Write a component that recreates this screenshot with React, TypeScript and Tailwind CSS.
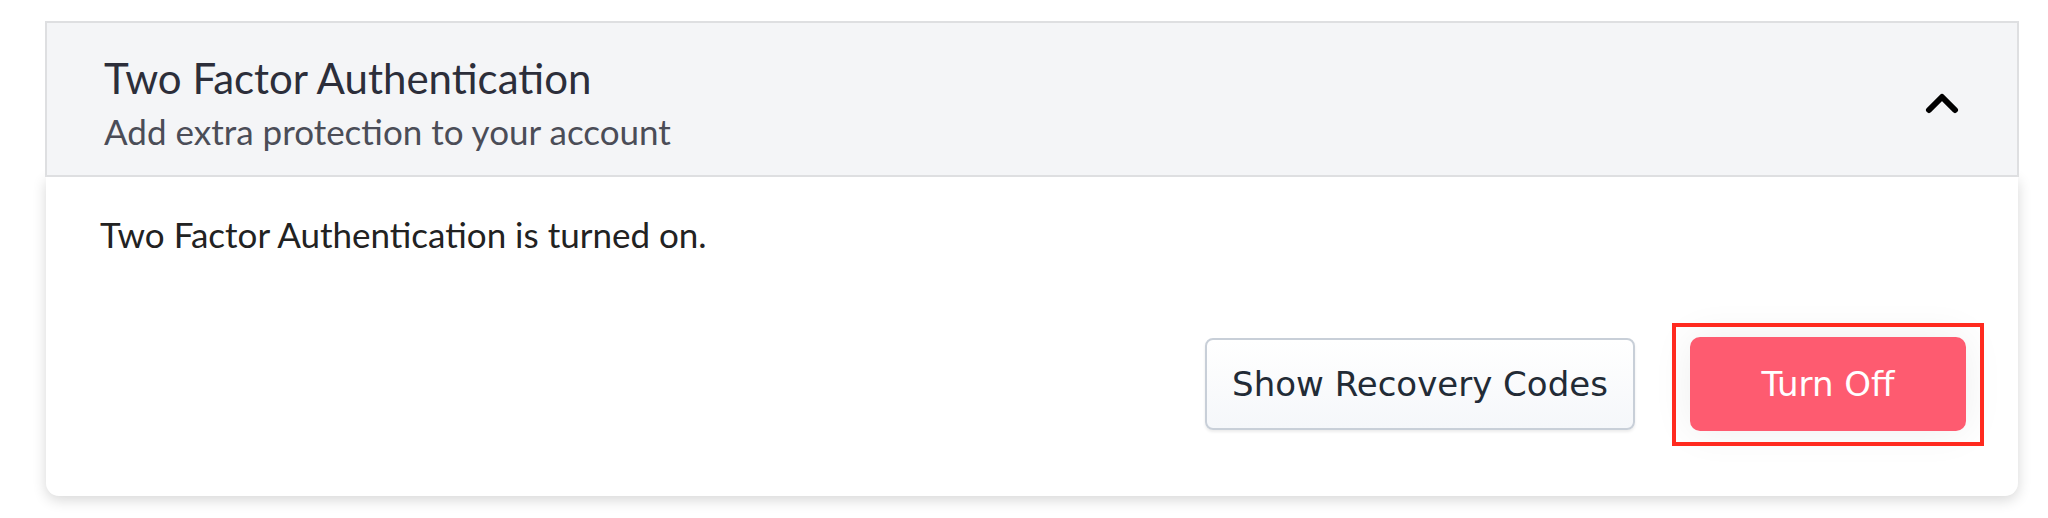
const lato = "font-['Lato','Noto_Sans',sans-serif]";
const btnFont = "font-['DejaVu_Sans','Liberation_Sans',sans-serif]";

function ChevronUp() {
  return (
    <svg width="34" height="22" viewBox="0 0 34 22" fill="none">
      <polyline
        points="4,18 17,5 30,18"
        stroke="#000"
        strokeWidth="6"
        strokeLinecap="round"
        strokeLinejoin="round"
      />
    </svg>
  );
}

export default function App() {
  return (
    <div className="min-h-[518px] w-[2048px] bg-white pt-[21px] pl-[45px]">
      <div className="w-[1974px]">
        {/* Accordion header */}
        <div className={`relative z-10 flex items-center justify-between border-2 border-[#dedfe1] bg-[#f4f5f7] pl-[57px] pr-[58px] pt-[30px] pb-[23px] ${lato}`}>
          <div className="flex flex-col gap-[7px]">
            <h2 className="text-[42px] leading-[1.2] font-normal text-[#2c2e3a]">Two Factor Authentication</h2>
            <p className="text-[35px] leading-[1.2] text-[#4b4d57]">Add extra protection to your account</p>
          </div>
          <ChevronUp />
        </div>

        {/* Accordion body */}
        <div className="mx-px rounded-b-[13px] bg-white pl-[54px] pr-[52px] pt-[36px] pb-[65px] shadow-[0_4px_14px_rgba(0,0,0,0.16)]">
          <p className={`text-[35px] leading-[1.2] text-[#222222] ${lato}`}>
            Two Factor Authentication is turned on.
          </p>
          <div className="mt-[82px] flex items-center justify-end gap-[55px]">
            <button className={`h-[92px] w-[430px] rounded-[8px] border-2 border-[#c8cfd8] bg-gradient-to-b from-white to-[#f5f7fa] text-[34px] text-[#222b36] shadow-[0_2px_3px_rgba(0,0,0,0.08)] ${btnFont}`}>
              Show Recovery Codes
            </button>
            <div className="relative">
              <button className={`h-[94px] w-[276px] rounded-[10px] bg-[#fe5b70] text-[34px] text-white shadow-[0_0_40px_rgba(0,0,0,0.07)] ${btnFont}`}>
                Turn Off
              </button>
              <div className="pointer-events-none absolute -left-[18px] -right-[18px] -top-[14px] -bottom-[15px] border-[4px] border-[#ff2a1f]" />
            </div>
          </div>
        </div>
      </div>
    </div>
  );
}
